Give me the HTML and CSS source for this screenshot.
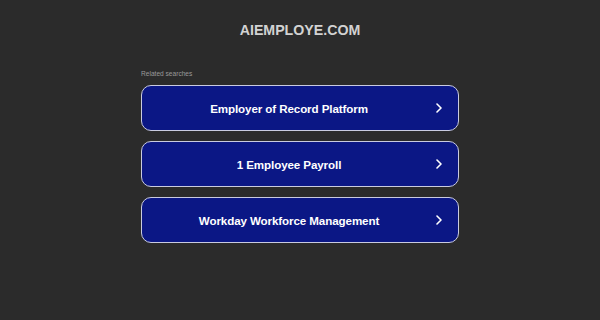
FILE: index.html
```html
<!DOCTYPE html>
<html lang="en">
<head>
<meta charset="utf-8">
<title>aiemploye.com</title>
<link rel="stylesheet" href="styles.css">
</head>
<body>
<div class="page">
  <header class="site-title">AIEMPLOYE.COM</header>
  <section class="related">
    <div class="related-label">Related searches</div>
    <ul class="links">
      <li><a class="link-btn" href="#"><span class="link-text">Employer of Record Platform</span><svg class="chev" viewBox="0 0 6 10" width="6" height="10"><path d="M1 1 L5 5 L1 9" fill="none" stroke="#fff" stroke-width="1.6" stroke-linecap="round" stroke-linejoin="round"/></svg></a></li>
      <li><a class="link-btn" href="#"><span class="link-text">1 Employee Payroll</span><svg class="chev" viewBox="0 0 6 10" width="6" height="10"><path d="M1 1 L5 5 L1 9" fill="none" stroke="#fff" stroke-width="1.6" stroke-linecap="round" stroke-linejoin="round"/></svg></a></li>
      <li><a class="link-btn" href="#"><span class="link-text">Workday Workforce Management</span><svg class="chev" viewBox="0 0 6 10" width="6" height="10"><path d="M1 1 L5 5 L1 9" fill="none" stroke="#fff" stroke-width="1.6" stroke-linecap="round" stroke-linejoin="round"/></svg></a></li>
    </ul>
  </section>
</div>
</body>
</html>
```

FILE: styles.css
```css
html, body {
  margin: 0;
  padding: 0;
  background: #2b2b2b;
  font-family: "Liberation Sans", Arial, sans-serif;
}
.page {
  width: 318px;
  margin: 0 auto;
  padding-top: 22px;
}
.site-title {
  text-align: center;
  color: #d2d2d2;
  font-weight: bold;
  font-size: 14.2px;
  line-height: 16px;
}
.related {
  margin-top: 32px;
}
.related-label {
  color: #9a9a9a;
  font-size: 6.6px;
  line-height: 8px;
  margin-bottom: 7px;
}
.links {
  list-style: none;
  margin: 0;
  padding: 0;
  display: flex;
  flex-direction: column;
  gap: 10px;
}
.link-btn {
  position: relative;
  display: flex;
  align-items: center;
  justify-content: center;
  height: 46px;
  box-sizing: border-box;
  padding: 0 28px 0 6px;
  border: 1px solid #c9cbe0;
  border-radius: 10px;
  background: #0b1785;
  color: #ffffff;
  text-decoration: none;
  font-weight: bold;
  font-size: 11.6px;
  letter-spacing: -0.1px;
}
.chev {
  position: absolute;
  right: 16px;
  top: 17px;
}
```
